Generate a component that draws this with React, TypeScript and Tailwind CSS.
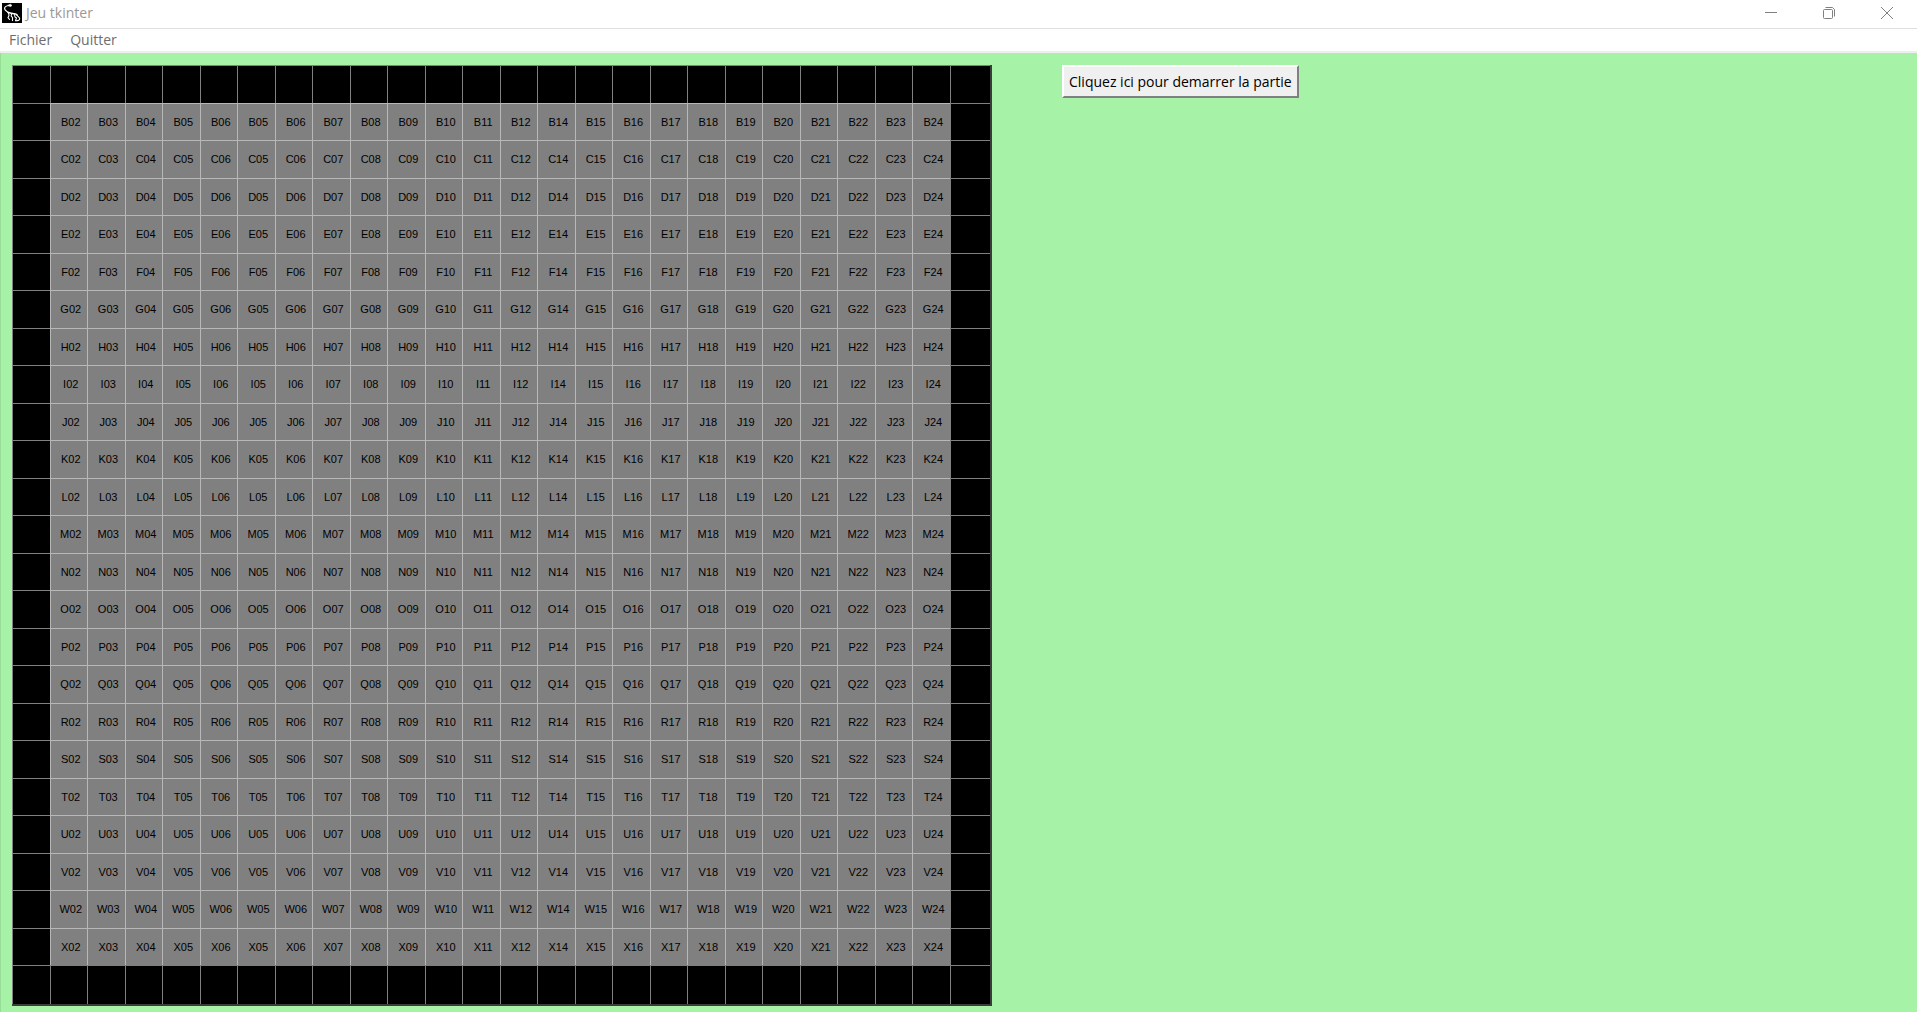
const columns = [
  '02', '03', '04', '05', '06', '05', '06', '07', '08', '09', '10', '11', '12',
  '14', '15', '16', '17', '18', '19', '20', '21', '22', '23', '24',
];
const rows = 'ABCDEFGHIJKLMNOPQRSTUVWXY'.split('');

function DinosaurIcon() {
  return (
    <svg viewBox="0 0 20 20" className="size-5 bg-black" fill="none" stroke="#fff" strokeLinecap="round" aria-hidden="true">
      <path d="M6 2.200 8.500 1.200 10 2.500 8.500 3.500Z" fill="#fff" strokeWidth=".6" />
      <path d="M7 2.500C4.500 2.800 2.600 4 2.600 5.500S4.500 8.300 6.500 9.500" strokeWidth="1.200" />
      <path d="M6 9.500c2 .2 4 1 5.500 1.200S14 10.500 15 12" strokeWidth="1.600" />
      <path d="m6.500 10 .5 2.500-1 2.200 1.500 1.800M9.500 11l-.3 2 1.300 1.500v3M12.500 11.500l.5 2.500 1.500 1-1 2.500" strokeWidth="1.100" />
      <path d="M15 12c.3 1.500 2.700 2 2.700 3.800 0 1.500-2 2-4.200 2" strokeWidth="1.100" />
    </svg>
  );
}

function Board() {
  return (
    <div className="grid h-[941px] w-[980px] shrink-0 grid-cols-[repeat(25,75fr)_81fr] grid-rows-[repeat(24,75fr)_78fr] border-r-2 border-b-2 border-[#3c3c3c] bg-black text-[11px] leading-4 text-black">
      {rows.map((row, r) =>
        ['', ...columns, ''].map((column, c) => {
          const playable = r > 0 && r < 24 && column !== '';
          return (
            <div
              key={`${row}-${c}`}
              className={
                playable
                  ? 'flex min-w-0 items-center justify-center overflow-hidden border-t border-l border-[#b8b8b8] bg-[#808080] pl-1'
                  : 'border-t border-l border-[#808080]'
              }
            >
              {playable ? row + column : null}
            </div>
          );
        }),
      )}
    </div>
  );
}

export default function App() {
  return (
    <div className="flex min-h-screen flex-col bg-white font-['Liberation_Sans',Arial,sans-serif]">
      <header className="flex h-7 items-center bg-white pb-0.5 pl-0.5 font-['Open_Sans','Noto_Sans',sans-serif]">
        <DinosaurIcon />
        <h1 className="ml-1 flex-1 text-[14px] leading-5 text-[#999999]">Jeu tkinter</h1>
        <div className="flex pr-px text-[#808080]">
          <button aria-label="Minimiser" className="flex h-6 w-[58px] items-center justify-center">
            <svg viewBox="0 0 12 12" className="size-3" stroke="currentColor"><path d="M0 5.500h12" /></svg>
          </button>
          <button aria-label="Restaurer" className="flex h-6 w-[58px] items-center justify-center">
            <svg viewBox="0 0 12 12" className="size-3" fill="none" stroke="currentColor">
              <rect x=".5" y="2.500" width="9" height="9" rx="1" />
              <path d="M2.500 .5h7l2 2v7" />
            </svg>
          </button>
          <button aria-label="Fermer" className="flex h-6 w-[58px] items-center justify-center">
            <svg viewBox="0 0 12 12" className="size-3" stroke="currentColor"><path d="m0 0 12 12M12 0 0 12" /></svg>
          </button>
        </div>
      </header>
      <nav className="flex h-[25px] items-center gap-[18px] border-t border-b-2 border-t-[#e0e0e0] border-b-[#eeeeee] pl-[9px] font-['Open_Sans','Noto_Sans',sans-serif] text-[14px] leading-5 text-[#6d6d6d]">
        <button>Fichier</button>
        <button>Quitter</button>
      </nav>
      <main className="flex flex-1 items-start border-l border-[#98dc98] bg-[#a6f2a6] pt-3 pl-[11px]">
        <Board />
        <button className="ml-[70px] h-[33px] border-2 border-t-white border-r-[#808080] border-b-[#808080] border-l-white bg-[#f0f0f0] px-[5px] font-['Open_Sans','Noto_Sans',sans-serif] text-[14px] leading-5 whitespace-nowrap text-black">
          Cliquez ici pour demarrer la partie
        </button>
      </main>
    </div>
  );
}
